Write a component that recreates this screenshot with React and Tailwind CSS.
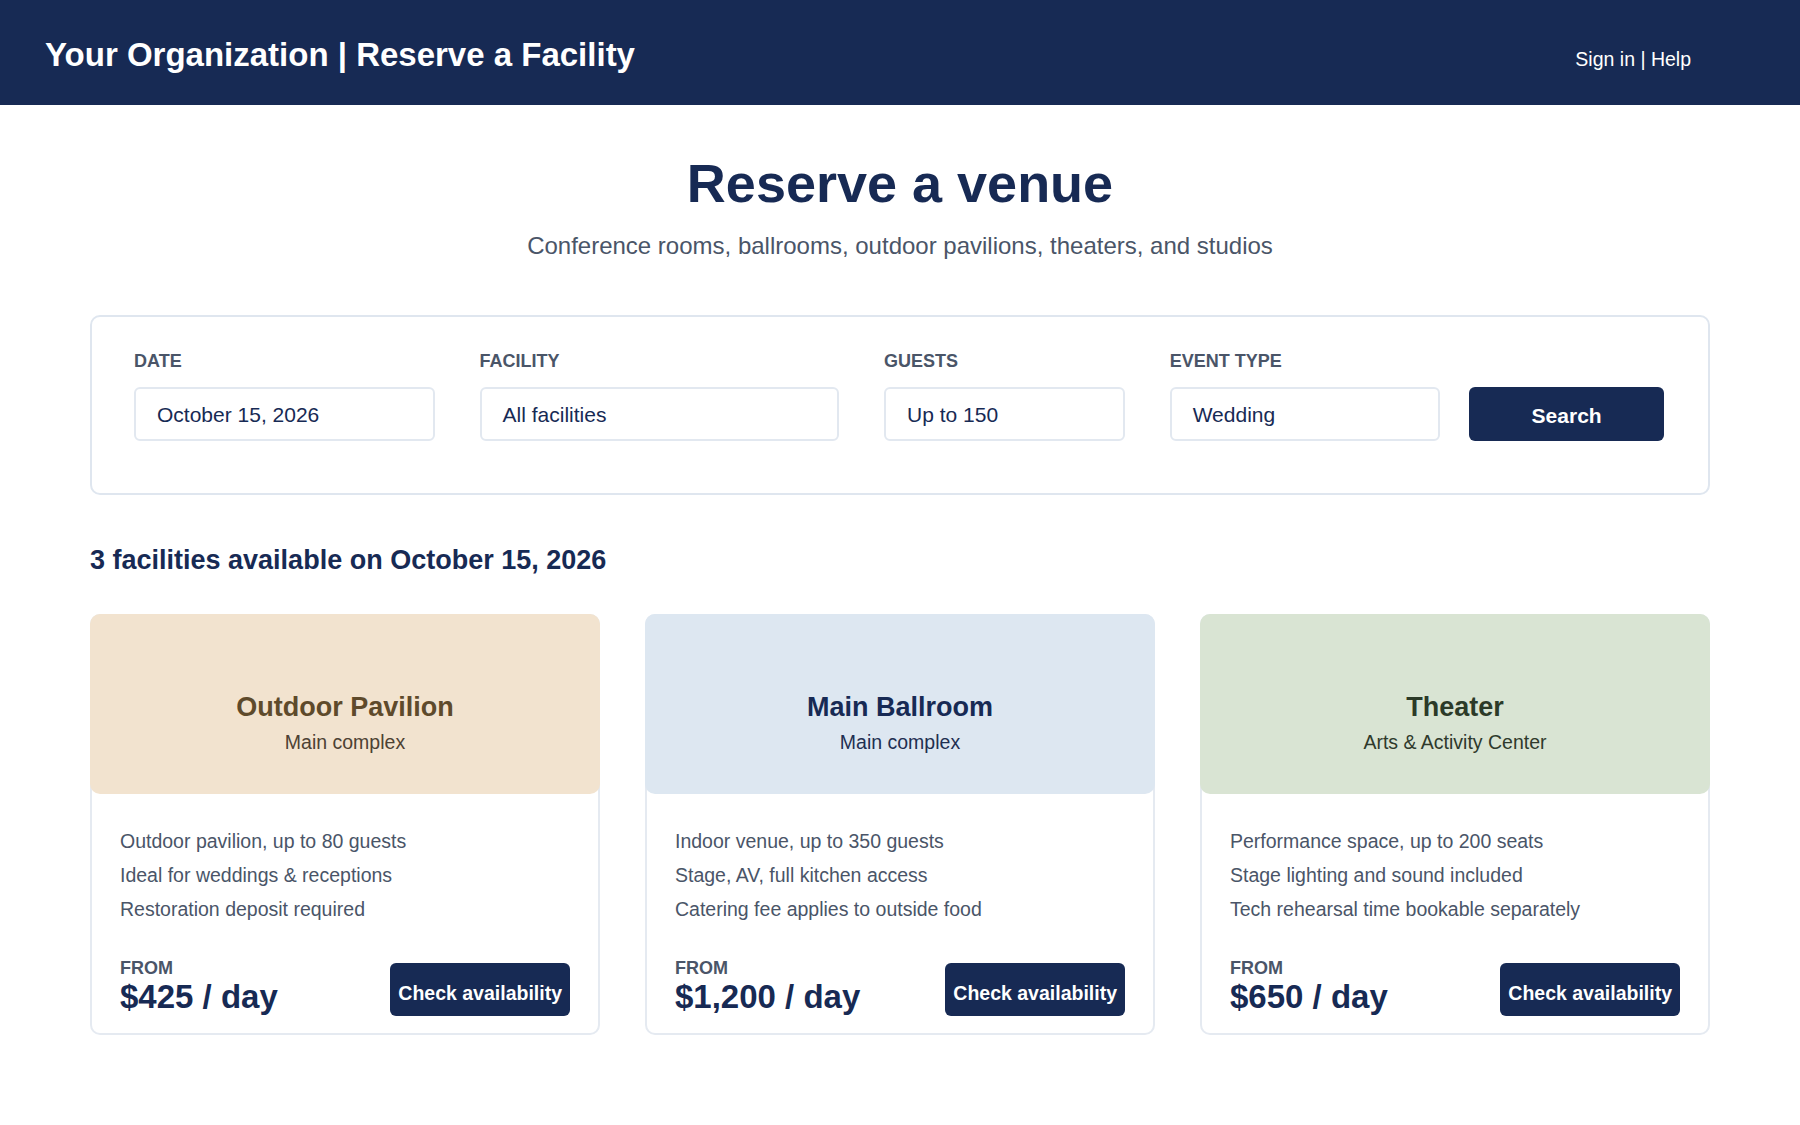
import React from 'react'

const fields = [
    { label: "Date", value: "October 15, 2026", width: "w-[301px]" },
    { label: "Facility", value: "All facilities", width: "w-[360px]" },
    { label: "Guests", value: "Up to 150", width: "w-[241px]" },
    { label: "Event type", value: "Wedding", width: "w-[271px]" },
];

const venues = [
    {
        name: "Outdoor Pavilion",
        place: "Main complex",
        bg: "bg-[#f2e3cf]",
        title: "text-[#5e4a2b]",
        sub: "text-[#4d4133]",
        features: ["Outdoor pavilion, up to 80 guests", "Ideal for weddings & receptions", "Restoration deposit required"],
        price: "$425 / day",
    },
    {
        name: "Main Ballroom",
        place: "Main complex",
        bg: "bg-[#dde7f1]",
        title: "text-[#172a54]",
        sub: "text-[#1f2f52]",
        features: ["Indoor venue, up to 350 guests", "Stage, AV, full kitchen access", "Catering fee applies to outside food"],
        price: "$1,200 / day",
    },
    {
        name: "Theater",
        place: "Arts & Activity Center",
        bg: "bg-[#d9e4d3]",
        title: "text-[#2c3a28]",
        sub: "text-[#2f3a2c]",
        features: ["Performance space, up to 200 seats", "Stage lighting and sound included", "Tech rehearsal time bookable separately"],
        price: "$650 / day",
    },
];

const App = () => {
    return (
        <div className="min-h-screen bg-white font-['Liberation_Sans',Arial,sans-serif]">
            {/* Header */}
            <header className="h-[105px] bg-[#172a54] flex items-start justify-between pl-[45px] pr-[109px]">
                <h1 className="pt-[38px] text-[33px] leading-none font-bold text-white">
                    Your Organization | Reserve a Facility
                </h1>
                <nav className="pt-[50px] text-[19.5px] leading-none text-white">Sign in | Help</nav>
            </header>

            <main className="w-[1620px] mx-auto">
                <div className="pt-[51px] flex flex-col items-center">
                    <h2 className="text-[54px] leading-none font-bold text-[#172a54]">Reserve a venue</h2>
                    <p className="mt-[22px] text-[24px] leading-[1.2] text-[#4a5568]">
                        Conference rooms, ballrooms, outdoor pavilions, theaters, and studios
                    </p>
                </div>

                {/* Search panel */}
                <section className="mt-[54px] border-2 border-[#dfe6ef] rounded-[10px] pl-[42px] pr-[44px] pt-[34px] pb-[52px] flex items-end">
                    {fields.map((f) => (
                        <div key={f.label} className={`${f.width} mr-[45px] flex flex-col`}>
                            <span className="text-[18px] leading-[1.2] font-bold uppercase text-[#4a5568]">{f.label}</span>
                            <div className="mt-[15px] h-[54px] border-2 border-[#e2e8f0] rounded-[6px] flex items-center px-[21px] text-[21px] text-[#172a54]">
                                {f.value}
                            </div>
                        </div>
                    ))}
                    <button className="-ml-[16px] w-[195px] h-[54px] pt-[3px] rounded-[6px] bg-[#172a54] text-white text-[21px] font-bold">
                        Search
                    </button>
                </section>

                <h3 className="mt-[49px] text-[27px] leading-[1.2] font-bold text-[#172a54]">
                    3 facilities available on October 15, 2026
                </h3>

                {/* Cards */}
                <div className="mt-[37px] grid grid-cols-3 gap-[45px]">
                    {venues.map((v) => (
                        <div key={v.name} className="h-[421px] border-2 border-[#e5eaf1] rounded-[10px] flex flex-col">
                            <div className={`-mx-[2px] -mt-[2px] h-[180px] rounded-[10px] ${v.bg} flex flex-col items-center pt-[77px]`}>
                                <h4 className={`text-[27px] leading-[1.2] font-bold ${v.title}`}>{v.name}</h4>
                                <p className={`mt-[5px] text-[19.5px] leading-[1.5] ${v.sub}`}>{v.place}</p>
                            </div>
                            <div className="flex-1 flex flex-col px-[28px] pt-[30px] pb-[17px]">
                                <ul className="text-[19.5px] leading-[34px] text-[#4a5568]">
                                    {v.features.map((t) => (
                                        <li key={t}>{t}</li>
                                    ))}
                                </ul>
                                <div className="mt-auto flex items-end justify-between">
                                    <div className="flex flex-col">
                                        <span className="text-[18px] leading-[20px] font-bold text-[#4a5568]">FROM</span>
                                        <span className="text-[33px] leading-[38px] font-bold text-[#172a54]">{v.price}</span>
                                    </div>
                                    <button className="h-[53px] px-[8px] pt-[8px] rounded-[6px] bg-[#172a54] text-white text-[19.5px] font-bold">
                                        Check availability
                                    </button>
                                </div>
                            </div>
                        </div>
                    ))}
                </div>
            </main>
        </div>
    )
}

export default App
